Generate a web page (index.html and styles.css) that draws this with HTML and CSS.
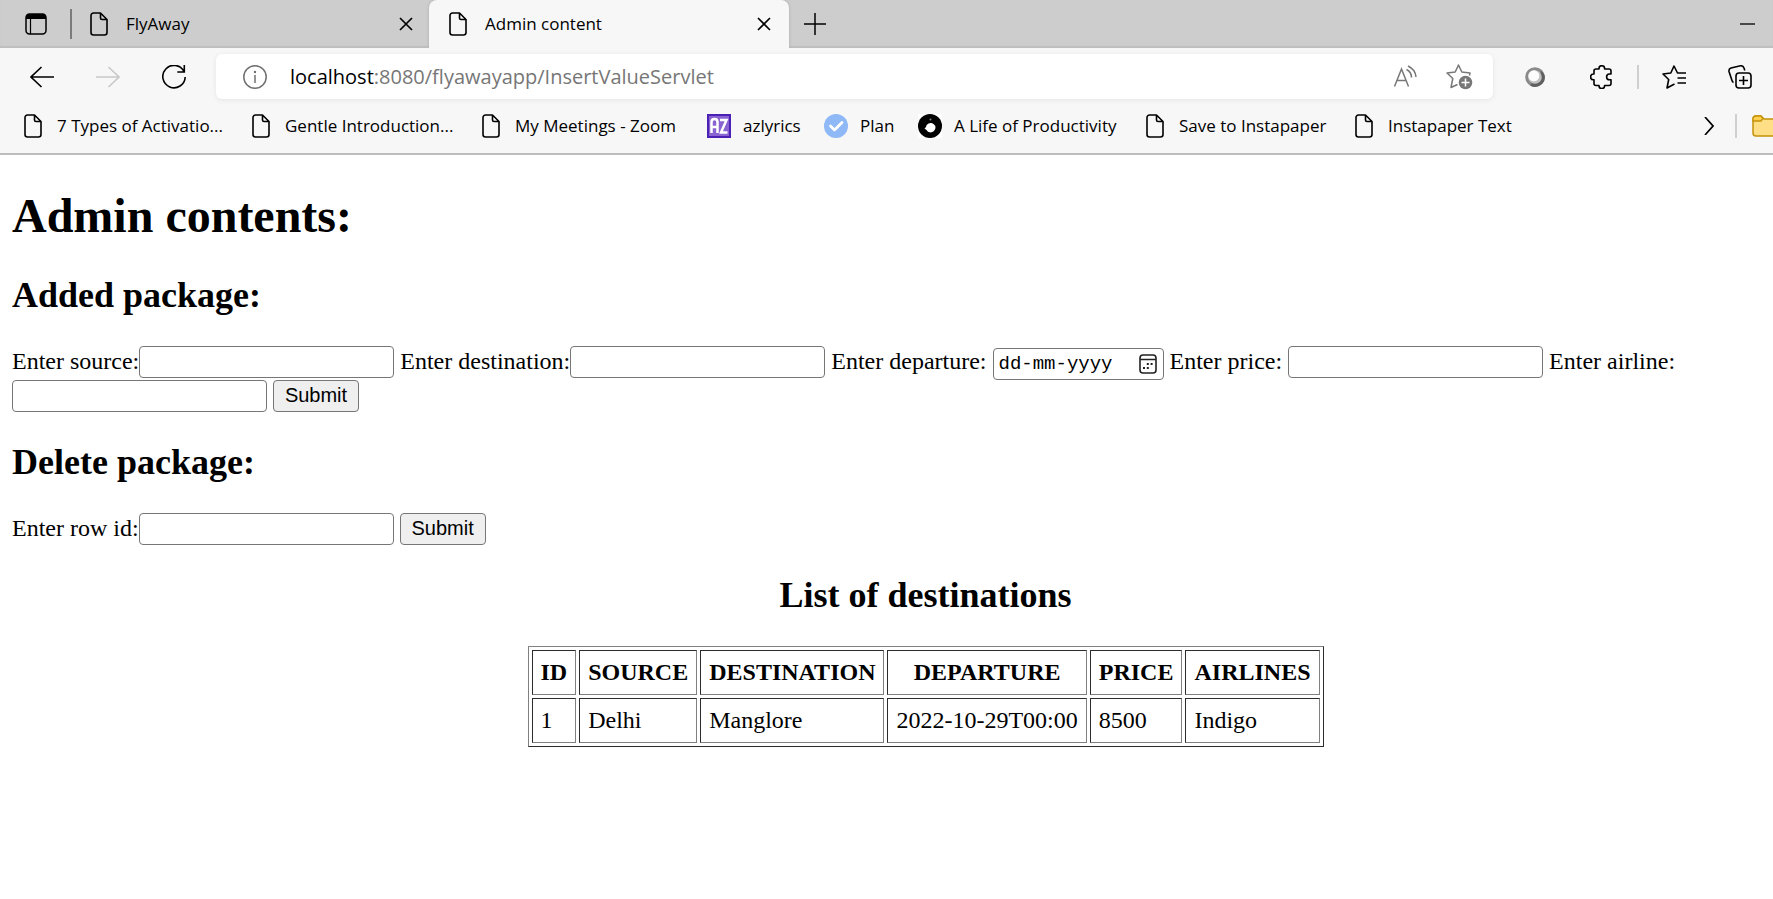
FILE: index.html
```
<!DOCTYPE html>
<html lang="en">
<head>
<meta charset="utf-8">
<title>Admin content</title>
<link rel="stylesheet" href="styles.css">
</head>
<body>
<svg class="defs" aria-hidden="true">
  <symbol id="page" viewBox="0 0 18 24"><path d="M3.500 1h7l6.500 6.500v13a2.500 2.500 0 0 1-2.500 2.500h-11a2.500 2.500 0 0 1-2.500-2.500v-17a2.500 2.500 0 0 1 2.500-2.500zM10.500 1v5a1.500 1.500 0 0 0 1.500 1.500h5" fill="none" stroke="currentColor" stroke-width="1.600" stroke-linejoin="round"/></symbol>
  <symbol id="cross" viewBox="0 0 14 14"><path d="M1 1l12 12M13 1L1 13" stroke="currentColor" stroke-width="1.700" fill="none"/></symbol>
</svg>
<header class="browser">
  <div class="tabs">
    <button class="icon tab-menu" aria-label="Tab actions"><svg width="22" height="22" viewBox="0 0 22 22"><rect x="1" y="1" width="20" height="20" rx="3.500" fill="none" stroke="#000" stroke-width="1.500"/><path d="M1 6V4a3 3 0 0 1 3-3h14a3 3 0 0 1 3 3v2z"/><path d="M5.500 6v15" stroke="#000" stroke-width="1.200"/></svg></button>
    <span class="tab-rule"></span>
    <div class="tab"><svg class="page"><use href="#page"/></svg><span>FlyAway</span><button class="icon" aria-label="Close FlyAway"><svg width="14" height="14"><use href="#cross"/></svg></button></div>
    <div class="tab active"><svg class="page"><use href="#page"/></svg><span>Admin content</span><button class="icon" aria-label="Close Admin content"><svg width="14" height="14"><use href="#cross"/></svg></button></div>
    <button class="icon new-tab" aria-label="New tab"><svg width="22" height="22" viewBox="0 0 22 22"><path d="M11 0v22M0 11h22" stroke="#000" stroke-width="1.500"/></svg></button>
    <button class="icon minimise" aria-label="Minimise"><svg width="15" height="2"><path d="M0 1h15" stroke="#000" stroke-width="1.300"/></svg></button>
  </div>
  <div class="toolbar">
    <nav class="history">
      <button class="icon" aria-label="Back"><svg width="24" height="22" viewBox="0 0 24 22"><path d="M24 11H1M11.500 1L1 11l10.500 10" fill="none" stroke="#000" stroke-width="1.600"/></svg></button>
      <button class="icon" aria-label="Forward" disabled><svg width="24" height="22" viewBox="0 0 24 22"><path d="M0 11h23M12.500 1L23 11 12.500 21" fill="none" stroke="#c9c9c9" stroke-width="1.600"/></svg></button>
      <button class="icon" aria-label="Reload"><svg width="24" height="24" viewBox="0 0 24 24"><path d="M22 6.500A11.200 11.200 0 1 0 23.200 12M22.300 0v7h-7" fill="none" stroke="#000" stroke-width="1.600"/></svg></button>
    </nav>
    <div class="address">
      <button class="icon" aria-label="Site information"><svg width="24" height="24" viewBox="0 0 24 24"><circle cx="12" cy="12" r="11.200" fill="none" stroke="#707070" stroke-width="1.500"/><path d="M12 10v8" stroke="#707070" stroke-width="1.500"/><circle cx="12" cy="7" r="1.200" fill="#707070"/></svg></button>
      <span class="url"><b>localhost</b>:8080/flyawayapp/InsertValueServlet</span>
      <button class="icon" aria-label="Read aloud"><svg width="24" height="24" viewBox="0 0 24 24"><path d="M1.500 21.500L8.500 4l7 17.500M4 15.500h9M13.500 4.500q5 2.500 5 8M15 1q7.500 3.500 8 11" fill="none" stroke="#777" stroke-width="1.500"/></svg></button>
      <button class="icon" aria-label="Add to favourites"><svg width="27" height="26" viewBox="0 0 27 26"><path d="M23.500 11.500L24 9l-8.200-1L12.500 1 9.200 8 1 9l5.800 5.500L5 23.500l6.500-3" fill="none" stroke="#777" stroke-width="1.500" stroke-linejoin="round"/><circle cx="19.500" cy="18.500" r="6.800" fill="#777"/><path d="M19.500 14.500v8M15.500 18.500h8" stroke="#fff" stroke-width="1.500"/></svg></button>
    </div>
    <div class="tools">
      <button class="icon" aria-label="Extension"><svg width="20" height="20" viewBox="0 0 20 20"><circle cx="10" cy="10" r="9.800" fill="#8a8a8a"/><path d="M19.600 8A9.800 9.800 0 0 1 5 18.400L16.500 4z" fill="#5f5f5f"/><circle cx="10" cy="10" r="6.800" fill="#c2c2c2"/><circle cx="8.800" cy="8.800" r="5.500" fill="#fcfcfc"/></svg></button>
      <button class="icon puzzle" aria-label="Extensions"><svg width="22" height="24" viewBox="0 0 22 24"><path d="M4 6a2 2 0 0 1 2-2h3v-.5a2.800 2.800 0 0 1 5.600 0V4H19a2 2 0 0 1 2 2v3h-1.500a2.900 2.900 0 0 0 0 5.800H21v3.700a2 2 0 0 1-2 2h-4.400v.3a2.800 2.800 0 0 1-5.600 0v-.3H6a2 2 0 0 1-2-2v-3.700h-.5a2.900 2.900 0 0 1 0-5.800H4z" fill="none" stroke="#000" stroke-width="1.600" stroke-linejoin="round"/></svg></button>
      <span class="rule"></span>
      <button class="icon favs" aria-label="Favourites"><svg width="25" height="24" viewBox="0 0 25 24"><path d="M19 8h-3.500L12 1 8.800 8 1 9l5.700 5.500L5 23l7.500-4M15.500 8H24M15.500 13H24M15.500 18H24" fill="none" stroke="#000" stroke-width="1.600" stroke-linejoin="round"/></svg></button>
      <button class="icon" aria-label="Collections"><svg width="24" height="24" viewBox="0 0 24 24"><rect x="8" y="8" width="15" height="15" rx="3" fill="none" stroke="#000" stroke-width="1.600"/><path d="M15.500 11v9M11 15.500h9M5.500 17.500Q4.500 17 4 15.500L1 6.500Q.500 4 3 3l9.500-2.200Q15 .500 16 3l.8 2.500" fill="none" stroke="#000" stroke-width="1.600"/></svg></button>
    </div>
  </div>
  <nav class="bookmarks">
    <a href="#"><svg class="page"><use href="#page"/></svg>7 Types of Activatio...</a>
    <a href="#"><svg class="page"><use href="#page"/></svg>Gentle Introduction...</a>
    <a href="#"><svg class="page"><use href="#page"/></svg>My Meetings - Zoom</a>
    <a href="#" class="wide"><svg width="24" height="24" viewBox="0 0 24 24"><rect x="1" y="1" width="22" height="22" fill="#8a63d2" stroke="#4a20b5" stroke-width="2"/><path d="M4.500 19V8q0-3 3-3t3 3v11M4.500 13h6M13 6h6.500L14 18.500h6.500" fill="none" stroke="#fff" stroke-width="2.500"/></svg>azlyrics</a>
    <a href="#" class="wide"><svg width="24" height="24" viewBox="0 0 24 24"><circle cx="12" cy="12" r="12" fill="#8fb8f6"/><path d="M6.500 12l4 4 7.500-7.500" fill="none" stroke="#fff" stroke-width="2.800" stroke-linecap="round" stroke-linejoin="round"/></svg>Plan</a>
    <a href="#" class="wide"><svg width="24" height="24" viewBox="0 0 24 24"><rect width="24" height="24" fill="#fff"/><circle cx="12" cy="12" r="12"/><path d="M6.500 14.500L8 13q0-2.500 2.500-3.500 3-1 5 .5 2.500 1.500 2 4-1 4-5 4.500-3-.5-4-2.500z" fill="#fff"/><circle cx="12.500" cy="5.500" r="1" fill="#888"/></svg>A Life of Productivity</a>
    <a href="#"><svg class="page"><use href="#page"/></svg>Save to Instapaper</a>
    <a href="#"><svg class="page"><use href="#page"/></svg>Instapaper Text</a>
    <div class="more">
      <button class="icon" aria-label="More favourites"><svg width="10" height="18" viewBox="0 0 10 18"><path d="M1 0l8 9-8 9" fill="none" stroke="#000" stroke-width="1.700"/></svg></button>
      <span class="rule"></span>
      <button class="icon" aria-label="Other favourites"><svg width="27" height="22" viewBox="0 0 27 22"><path d="M1 4q0-3 3-3h5l3 3h11q3 0 3 3v11q0 3-3 3H4q-3 0-3-3z" fill="#ffdf85" stroke="#c4920a" stroke-width="1.500"/><path d="M1 6V4q0-3 3-3h5l2 2.500L9 6z" fill="#ffd04d" stroke="#c4920a" stroke-width="1.300"/></svg></button>
    </div>
  </nav>
</header>
<main class="content">
  <h1>Admin contents:</h1>
  <h2>Added package:</h2>
  <form>
    <label for="source">Enter source:</label><input class="field" id="source" type="text">
    <label for="destination">Enter destination:</label><input class="field" id="destination" type="text">
    <label for="departure">Enter departure:</label>
    <span class="date"><input id="departure" type="text" placeholder="dd-mm-yyyy"><button type="button" class="icon" aria-label="Show date picker"><svg width="18" height="20" viewBox="0 0 18 20"><rect x="1" y="1" width="16" height="18" rx="3" fill="none" stroke="#222" stroke-width="1.600"/><path d="M1 5.500h16" stroke="#222" stroke-width="1.500"/><path d="M7.800 10h2M11.600 10h2M4 14h2M7.800 14h2" stroke="#222" stroke-width="2"/></svg></button></span>
    <label for="price">Enter price:</label>
    <input class="field" id="price" type="text">
    <label for="airline">Enter airline:</label>
    <input class="field" id="airline" type="text">
    <button class="submit" type="submit">Submit</button>
  </form>
  <h2>Delete package:</h2>
  <form>
    <label for="row">Enter row id:</label><input class="field" id="row" type="text">
    <button class="submit" type="submit">Submit</button>
  </form>
  <table>
    <caption>List of destinations</caption>
    <thead><tr><th>ID</th><th>SOURCE</th><th>DESTINATION</th><th>DEPARTURE</th><th>PRICE</th><th>AIRLINES</th></tr></thead>
    <tbody><tr><td>1</td><td>Delhi</td><td>Manglore</td><td>2022-10-29T00:00</td><td>8500</td><td>Indigo</td></tr></tbody>
  </table>
</main>
</body>
</html>
```
FILE: styles.css
```
* { box-sizing: border-box; }
body { margin: 0; background: #fff; color: #000; overflow-x: hidden; }
.defs { display: none; }
svg { display: block; flex: none; }
.icon { display: flex; flex: none; padding: 0; border: 0; background: none; color: #000; }

.browser { background: #f7f7f7; border-bottom: 2px solid #bdbdbd; font: 17px/24px "Open Sans", sans-serif; overflow: hidden; }
.page { width: 18px; height: 24px; }
.tabs { display: flex; align-items: center; height: 48px; padding: 0 18px 0 25px; background: #cdcdcd; box-shadow: inset 0 -2px 1px #bfbfbf; }
.tab-rule { width: 2px; height: 30px; margin-left: 23px; background: #7b7b7b; }
.tab { display: flex; align-items: center; gap: 18px; width: 357px; height: 48px; padding: 0 16px 0 18px; }
.tab span { flex: 1; }
.tab.active { width: 360px; padding: 0 18px 0 20px; background: #f7f7f7; border-radius: 8px 8px 0 0; box-shadow: 0 0 3px #aaa; clip-path: inset(0 -4px 0 -4px); }
.new-tab { margin-left: 15px; }
.minimise { margin-left: auto; }

.toolbar { display: flex; align-items: center; height: 57px; padding: 0 21px 0 30px; }
.history { display: flex; align-items: center; gap: 42px; }
.address { display: flex; align-items: center; flex: 1; gap: 23px; height: 45px; margin: 0 32px 0 30px; padding: 0 20px 0 27px; background: #fff; border-radius: 6px; box-shadow: 0 1px 5px #e4e4e4; }
.url { flex: 1; font-size: 20px; line-height: 28px; color: #767676; }
.url b { font-weight: 400; color: #000; }
.address .icon:nth-of-type(2) { margin-right: 6px; }
.tools { display: flex; align-items: center; }
.puzzle { margin-left: 45px; }
.favs { margin: 0 41px 0 23px; }
.rule { width: 2px; height: 24px; background: #cfcfcf; }
.puzzle + .rule { margin-left: 25px; }

.bookmarks { display: grid; grid-template-columns: 228px 230px 225px 117px 94px 228px 209px 1fr auto; align-items: center; height: 48px; padding: 0 0 6px 24px; }
.bookmarks a { display: flex; align-items: center; gap: 15px; color: #000; text-decoration: none; white-space: nowrap; }
.bookmarks .wide { gap: 12px; }
.more { display: flex; align-items: center; margin-right: -6px; }
.more .rule { margin: 0 15px 0 21px; }

/* The document is laid out slightly wider than the visible window. */
.content { width: calc(100% + 78px); padding: 1px 12px; font: 24px "Liberation Serif", serif; }
h1 { margin: 32px 0; font-size: 48px; line-height: 55px; }
h2 { margin: 30px 0; font-size: 36px; line-height: 41px; }
form { line-height: 27px; }
.field { width: 255px; height: 32px; padding: 2px 3px; border: 1px solid #767676; border-radius: 4px; font: 20px "Liberation Sans", sans-serif; }
.submit { height: 32px; width: 86px; padding: 0; border: 1px solid #767676; border-radius: 4px; background: #efefef; color: #000; font: 20px "Liberation Sans", sans-serif; }
.date { display: inline-flex; align-items: center; width: 171px; height: 32px; padding: 0 6px 0 5px; border: 1px solid #767676; border-radius: 4px; }
.date input { flex: 1; min-width: 0; padding: 0; border: 0; font: 19px "Liberation Mono", monospace; }
.date input::placeholder { color: #000; opacity: 1; }
table { margin: 30px auto 0; border: 1px solid; border-color: #808080 #2b2b2b #2b2b2b #808080; border-spacing: 3px; }
caption { padding-bottom: 30px; font-size: 36px; font-weight: 700; line-height: 41px; }
th, td { padding: 8px; border: 1px solid; border-color: #2b2b2b #808080 #808080 #2b2b2b; line-height: 27px; }
```
